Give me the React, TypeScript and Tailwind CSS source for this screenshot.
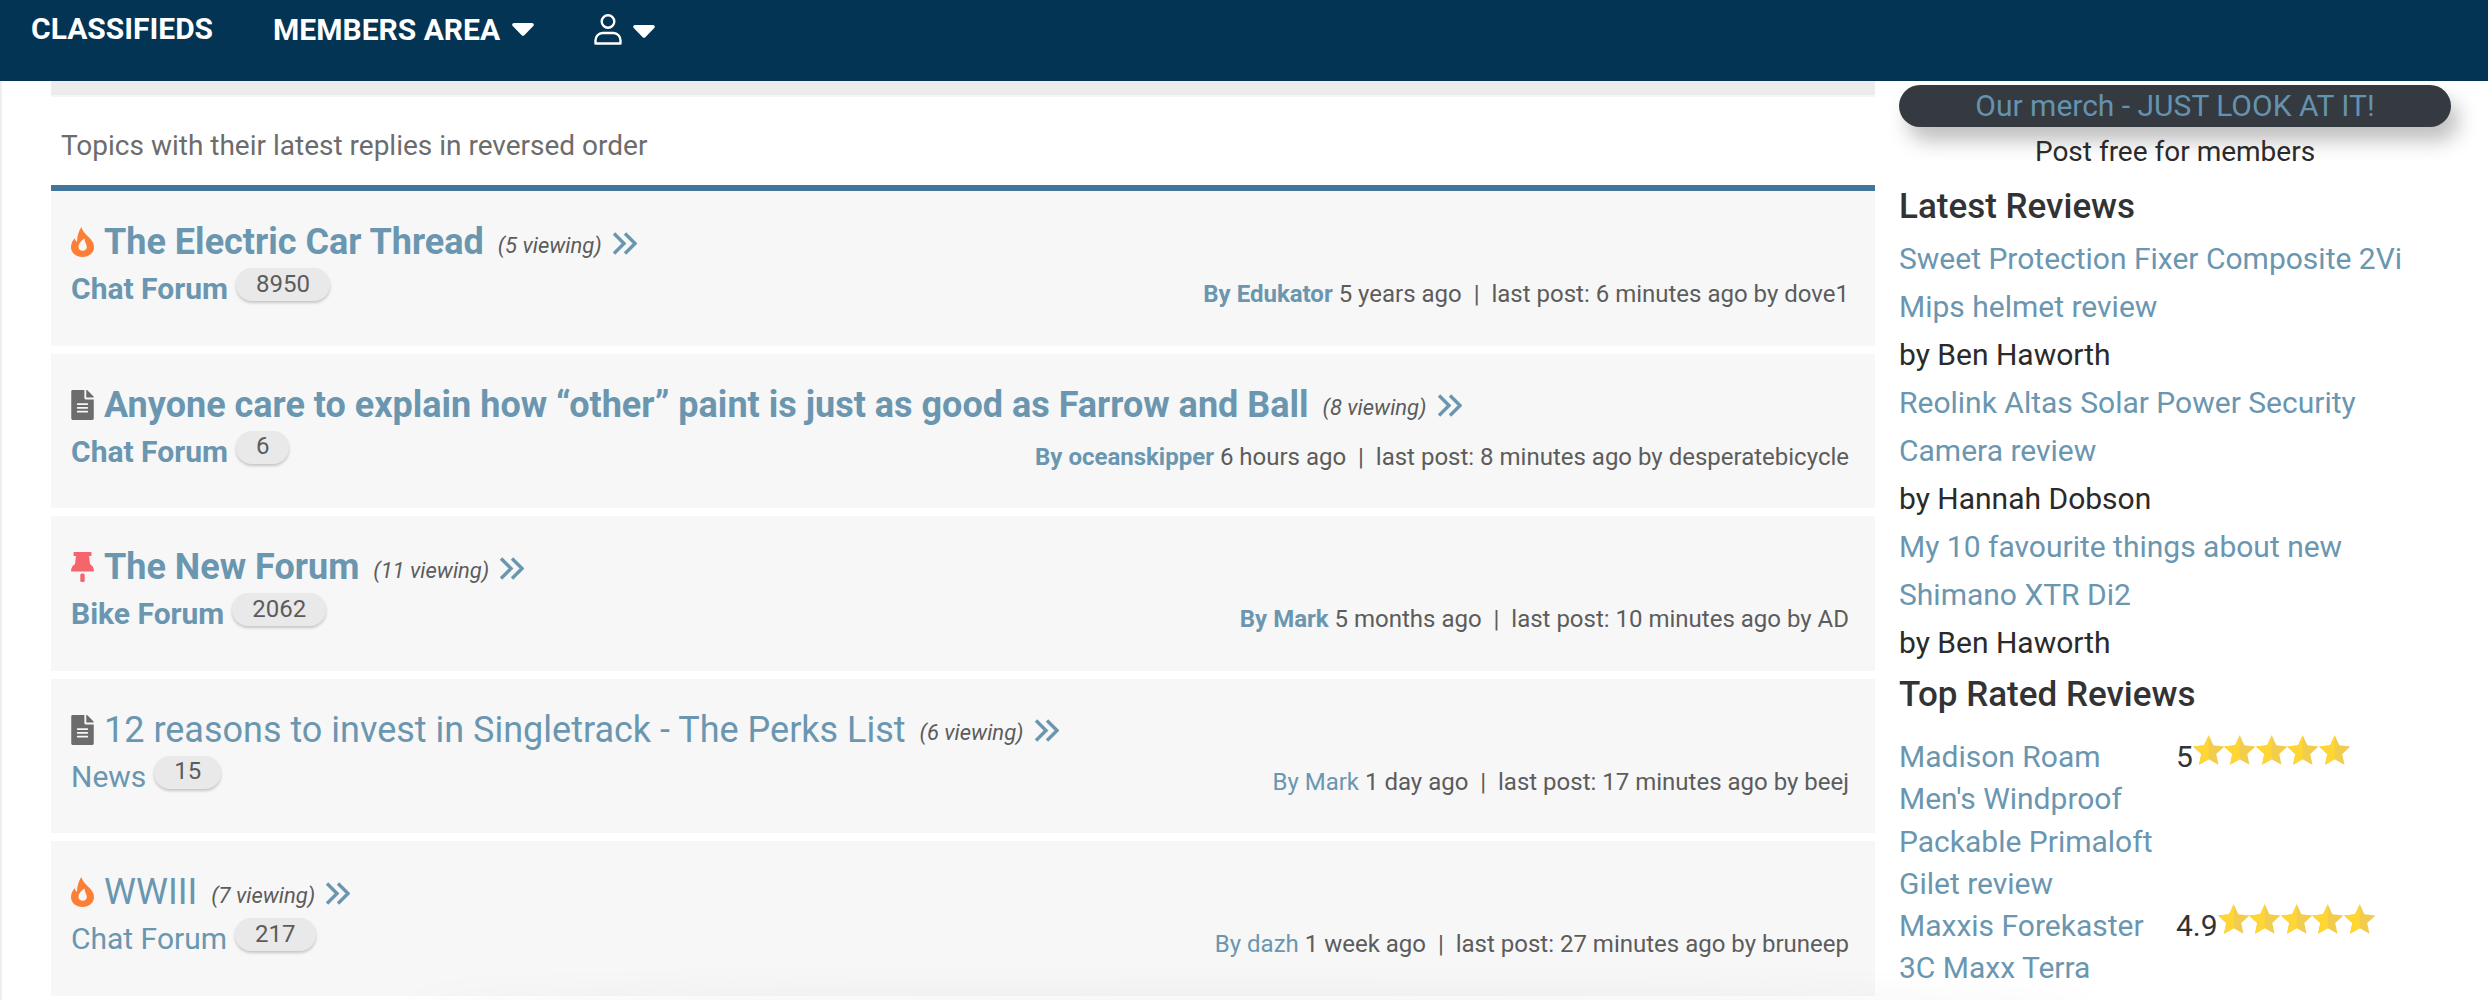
import { FaFileAlt } from "react-icons/fa";

const topics = [
  { icon: "fire", title: "The Electric Car Thread", viewing: "(5 viewing)", forum: "Chat Forum", count: "8950", by: "Edukator", ago: "5 years ago", last: "6 minutes ago by dove1", bold: true },
  { icon: "file", title: "Anyone care to explain how “other” paint is just as good as Farrow and Ball", viewing: "(8 viewing)", forum: "Chat Forum", count: "6", by: "oceanskipper", ago: "6 hours ago", last: "8 minutes ago by desperatebicycle", bold: true },
  { icon: "pin", title: "The New Forum", viewing: "(11 viewing)", forum: "Bike Forum", count: "2062", by: "Mark", ago: "5 months ago", last: "10 minutes ago by AD", bold: true },
  { icon: "file", title: "12 reasons to invest in Singletrack - The Perks List", viewing: "(6 viewing)", forum: "News", count: "15", by: "Mark", ago: "1 day ago", last: "17 minutes ago by beej", bold: false },
  { icon: "fire", title: "WWIII", viewing: "(7 viewing)", forum: "Chat Forum", count: "217", by: "dazh", ago: "1 week ago", last: "27 minutes ago by bruneep", bold: false },
];

function Caret() {
  return (
    <svg width="22" height="13" viewBox="0 0 22 13" className="shrink-0">
      <path d="M2 0h18c1.600 0 2.400 1.900 1.300 3l-9 9.300c-.7.700-1.900.7-2.600 0L.7 3C-.4 1.900.4 0 2 0z" fill="#fff" />
    </svg>
  );
}

function UserIcon() {
  return (
    <svg width="30" height="31" viewBox="0 0 30 31" fill="none" stroke="#fff" strokeWidth="2.400">
      <circle cx="15" cy="7.500" r="6.300" />
      <path d="M2.500 29.500v-3c0-4 3-7.500 7-7.500h11c4 0 7 3.500 7 7.500v3z" strokeLinejoin="round" />
    </svg>
  );
}

function FlameIcon() {
  return (
    <svg width="23" height="30" viewBox="0 0 23 30" className="shrink-0">
      <path
        fillRule="evenodd"
        fill="#fd7e35"
        d="M10.500 0c.8 3.500 2.800 5.500 5.500 8.500 3.500 3.500 7 6.500 7 11.500 0 5.800-5 10-11.500 10S0 25.800 0 20c0-3.700 1.800-6.900 3.700-8.800.6 1.700 1.300 2.800 2.300 3.500C6 9.500 7.500 4 10.500 0zM13.800 11.500c-3 1.800-6.300 4.900-6.300 8.200 0 2.500 1.900 4.100 4.200 4.100 2.300 0 4.100-1.600 4.100-4.100 0-2.900-2.700-4.700-2-8.200z"
      />
    </svg>
  );
}

function PinIcon() {
  return (
    <svg width="23" height="30" viewBox="0 0 23 30" className="shrink-0" fill="#f4656c">
      <path d="M3.500 0h16c.6 0 1 .4 1 1v2c0 .6-.4 1-1 1H18l1 8c2.200 1.300 3.700 3.500 4 6.500 0 .6-.4 1-1 1H1c-.6 0-1-.4-1-1 .3-3 1.800-5.200 4-6.500l1-8H3.500c-.6 0-1-.4-1-1V1c0-.6.4-1 1-1z" />
      <rect x="9.300" y="21.500" width="4.400" height="8.500" rx="1.500" />
    </svg>
  );
}

function TopicIcon({ type }: { type: string }) {
  if (type === "fire") return <FlameIcon />;
  if (type === "pin") return <PinIcon />;
  return <FaFileAlt className="h-[30px] w-[23px] shrink-0 text-[#6c6c6c]" />;
}

function DoubleChevron() {
  return (
    <svg width="25" height="23" viewBox="0 0 25 23" fill="none" stroke="#6a96b0" strokeWidth="3.400" className="ml-[10px] mt-0.5 shrink-0">
      <path d="M2 1.500l10 10-10 10M13 1.500l10 10-10 10" />
    </svg>
  );
}

function Star() {
  return (
    <svg width="31.500" height="30" viewBox="0 0 32 30" className="shrink-0">
      <path d="M16 0l4.700 10.300 11.300 1.200-8.400 7.600 2.300 11L16 24.500 6.100 30l2.300-11L0 11.500l11.300-1.200z" fill="#f2cc4d" />
      <path d="M16 0l-4.700 10.300L0 11.500l8.400 7.500L6.100 30 16 24.500z" fill="#ffd633" />
    </svg>
  );
}

function Rating({ value }: { value: string }) {
  return (
    <div className="flex items-start leading-[42.250px] text-[#333333]">
      <span>{value}</span>
      <div className="-mt-px flex">
        <Star />
        <Star />
        <Star />
        <Star />
        <Star />
      </div>
    </div>
  );
}

function TopicRow({ t }: { t: (typeof topics)[number] }) {
  return (
    <div className="mb-2 flex h-[154.500px] flex-col bg-[#f7f7f7] pl-5 pr-[26px] pt-[29px]">
      <div className="flex h-11 items-center">
        <TopicIcon type={t.icon} />
        <span className={`ml-2.5 text-[36px] leading-[44px] text-[#6a96b0] ${t.bold ? "font-bold" : "font-normal"}`}>{t.title}</span>
        <span className="ml-3.5 mt-1.5 text-[22px] italic text-[#5c5c5c]">{t.viewing}</span>
        <DoubleChevron />
      </div>
      <div className="mt-1 flex items-start justify-between">
        <div className="flex items-start">
          <span className={`text-[30px] leading-[42px] text-[#6a96b0] ${t.bold ? "font-bold" : "font-normal"}`}>{t.forum}</span>
          <span className="ml-2 flex h-[33px] items-center rounded-[16px] bg-[#e9e9e9] px-5 pb-0.5 text-[24px] text-[#5c5c5c] shadow-[0_2px_3px_rgba(0,0,0,0.2)]">{t.count}</span>
        </div>
        <div className="pt-2.5 text-[24px] leading-[32px] text-[#5c5c5c]">
          <span className={`text-[#6a96b0] ${t.bold ? "font-bold" : "font-normal"}`}>By {t.by}</span> {t.ago}&nbsp; | &nbsp;last post: {t.last}
        </div>
      </div>
    </div>
  );
}

export default function App() {
  return (
    <div className="relative h-screen overflow-hidden bg-white font-['Roboto',sans-serif]">
      <header className="flex h-[81px] items-start bg-[#033453] pl-[31px] text-[30px] font-bold text-white">
        <span className="mt-[9px] leading-[40px]">CLASSIFIEDS</span>
        <div className="ml-[60px] mt-[9px] flex h-10 items-center gap-3">
          <span>MEMBERS AREA</span>
          <Caret />
        </div>
        <div className="ml-[59px] mt-[14px] flex items-start gap-2.5">
          <UserIcon />
          <div className="mt-[11px]">
            <Caret />
          </div>
        </div>
      </header>

      <div className="flex border-l-2 border-[#eeeeee] pl-[49px]">
        <main className="w-[1824px] shrink-0">
          <div className="h-[16px] border-b-2 border-[#f5f5f5] bg-[#ececec]" />
          <p className="h-[88px] pl-2.5 pt-[30px] text-[28px] leading-[38px] text-[#6c6c6c]">Topics with their latest replies in reversed order</p>
          <div className="border-t-[6px] border-[#41769a]">
            {topics.map((t) => (
              <TopicRow key={t.title} t={t} />
            ))}
          </div>
        </main>

        <aside className="ml-6 w-[552px] shrink-0 pt-1 text-[30px]">
          <div className="flex h-[42px] items-center justify-center rounded-[21px] bg-[#343a40] pb-0.5 text-[#6592ae] shadow-[8px_14px_20px_rgba(0,0,0,0.25)]">Our merch - JUST LOOK AT IT!</div>
          <p className="mt-1.5 text-center text-[28px] leading-[38px] text-[#2a2a2a]">Post free for members</p>

          <h2 className="mt-3 text-[35px] font-medium leading-[48px] text-[#333333]">Latest Reviews</h2>
          <div className="pt-[4px] leading-[48px]">
            <a className="block text-[#6a96b0]">Sweet Protection Fixer Composite 2Vi</a>
            <a className="block text-[#6a96b0]">Mips helmet review</a>
            <p className="text-[#2a2a2a]">by Ben Haworth</p>
            <a className="block text-[#6a96b0]">Reolink Altas Solar Power Security</a>
            <a className="block text-[#6a96b0]">Camera review</a>
            <p className="text-[#2a2a2a]">by Hannah Dobson</p>
            <a className="block text-[#6a96b0]">My 10 favourite things about new</a>
            <a className="block text-[#6a96b0]">Shimano XTR Di2</a>
            <p className="text-[#2a2a2a]">by Ben Haworth</p>
          </div>

          <h2 className="mt-1 text-[35px] font-medium leading-[48px] text-[#333333]">Top Rated Reviews</h2>
          <div className="mt-[17px] grid grid-cols-[277px_1fr] leading-[42.250px] text-[#6a96b0]">
            <a>Madison Roam<br />Men's Windproof<br />Packable Primaloft<br />Gilet review</a>
            <Rating value="5" />
            <a>Maxxis Forekaster<br />3C Maxx Terra<br />review</a>
            <Rating value="4.9" />
          </div>
        </aside>
      </div>

      <div className="absolute -bottom-[30px] left-[400px] h-[30px] w-[1700px] rounded-[50%] shadow-[0_-4px_40px_rgba(0,0,0,0.06)]" />
    </div>
  );
}
